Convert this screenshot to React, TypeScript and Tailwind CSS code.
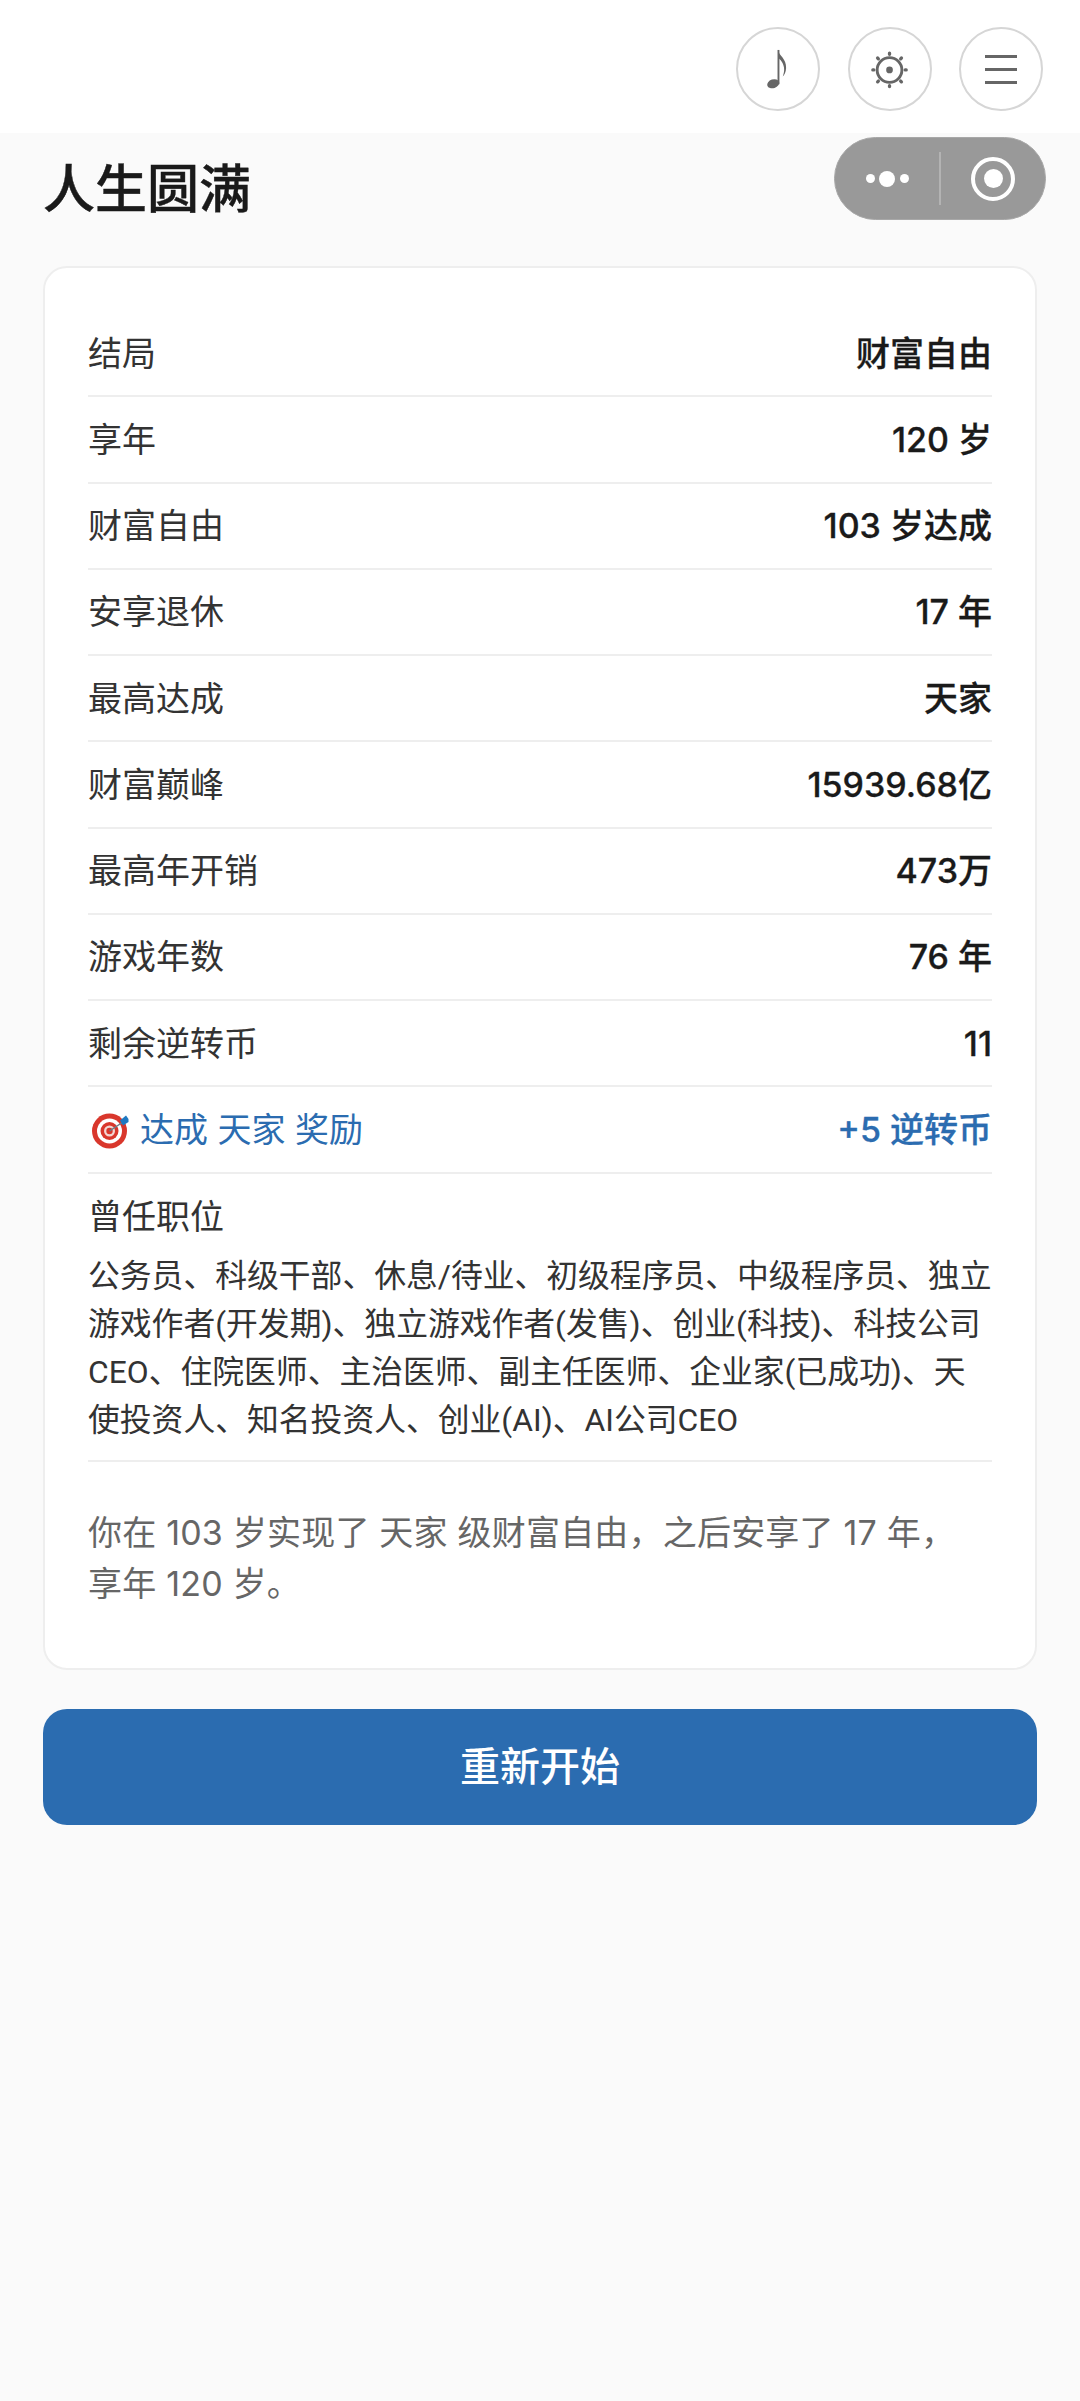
const rows = [
  ['结局', '财富自由'],
  ['享年', '120 岁'],
  ['财富自由', '103 岁达成'],
  ['安享退休', '17 年'],
  ['最高达成', '天家'],
  ['财富巅峰', '15939.68亿'],
  ['最高年开销', '473万'],
  ['游戏年数', '76 年'],
  ['剩余逆转币', '11'],
];

function NoteIcon() {
  return (
    <svg width="84" height="84" viewBox="0 0 84 84" fill="#666">
      <ellipse cx="37" cy="57.5" rx="6.5" ry="4.6" transform="rotate(-18 37 57.5)" />
      <rect x="41.5" y="22" width="2" height="36" />
      <path d="M42 22c1 6 9 9 8.500 19-.2 4-1.500 7-3.500 9 1-3 1.800-6 1.300-9.500C47.500 35 44 32 42 30z" />
    </svg>
  );
}

function GearIcon() {
  return (
    <svg width="84" height="84" viewBox="0 0 84 84" fill="none" stroke="#666">
      <circle cx="41.500" cy="43" r="13" strokeWidth="3" />
      <circle cx="41.500" cy="43" r="3.500" fill="#666" stroke="none" />
      <g strokeWidth="3.500" strokeLinecap="round">
        <path d="M41.500 26.500v-1M41.500 59.500v1M25 43h-1M58 43h1" />
        <path d="M29.800 31.300l-.8-.8M53.200 31.300l.8-.8M29.800 54.700l-.8.8M53.200 54.700l.8.8" />
      </g>
    </svg>
  );
}

function TargetEmoji() {
  return (
    <svg width="40" height="40" viewBox="0 0 40 40" className="ml-[3px] shrink-0">
      <circle cx="18.500" cy="22" r="17.500" fill="#d9372c" />
      <circle cx="18.500" cy="22" r="12.500" fill="#fff" />
      <circle cx="18.500" cy="22" r="9" fill="#d9372c" />
      <circle cx="18.500" cy="22" r="5.500" fill="#f3d6d2" />
      <circle cx="18.500" cy="22" r="3.200" fill="#d9372c" />
      <path d="M18.500 22L32 13" stroke="#6b7c88" strokeWidth="1.500" />
      <path d="M29 11.500l6-5 2.500 3.500 0 3-5.500 3.500z" fill="#1f78c1" />
    </svg>
  );
}

export default function App() {
  return (
    <div
      className="relative min-h-[2401px] bg-[#fafafa] text-[#333]"
      style={{ fontFamily: 'Inter, "Noto Sans CJK SC", sans-serif' }}
    >
      {/* top bar */}
      <header className="flex h-[133px] items-center justify-end gap-[27.500px] bg-white pt-[5px] pr-[37px]">
        <button className="flex h-[84px] w-[84px] items-center justify-center rounded-full border-2 border-[#d6d6d6]">
          <NoteIcon />
        </button>
        <button className="flex h-[84px] w-[84px] items-center justify-center rounded-full border-2 border-[#d6d6d6]">
          <GearIcon />
        </button>
        <button className="flex h-[84px] w-[84px] flex-col items-center justify-center gap-[10px] rounded-full border-2 border-[#d6d6d6]">
          <span className="h-[3px] w-[32px] bg-[#666]" />
          <span className="h-[3px] w-[32px] bg-[#666]" />
          <span className="h-[3px] w-[32px] bg-[#666]" />
        </button>
      </header>

      {/* capsule of the host app */}
      <div className="absolute left-[834px] top-[137px] flex h-[83px] w-[212px] items-center rounded-full border border-[#a8a8a8] bg-[#999]">
        <div className="flex w-[104px] items-center justify-center gap-[4.500px]">
          <span className="h-[9px] w-[9px] rounded-full bg-white" />
          <span className="h-[16px] w-[16px] rounded-full bg-white" />
          <span className="h-[9px] w-[9px] rounded-full bg-white" />
        </div>
        <span className="h-[53px] w-[2px] bg-[#b3b3b3]" />
        <div className="flex flex-1 items-center justify-center">
          <span className="flex h-[44px] w-[44px] items-center justify-center rounded-full border-[4px] border-white">
            <span className="h-[19px] w-[19px] rounded-full bg-white" />
          </span>
        </div>
      </div>

      <main className="px-[43px]">
        <h1 className="flex h-[133px] items-center pb-[20px] text-[52px] leading-none font-medium text-[#1a1a1a] [-webkit-text-stroke-width:0.4px]">
          人生圆满
        </h1>

        <section className="rounded-[24px] border-2 border-[#eeeeee] bg-white px-[43px] pt-[43px] pb-[59px]">
          {rows.map(([label, value]) => (
            <div key={label} className="flex h-[86.250px] items-center justify-between border-b-2 border-[#eeeeee] text-[34px]">
              <span>{label}</span>
              <span className="font-medium text-[#1a1a1a] [-webkit-text-stroke-width:0.3px]">{value}</span>
            </div>
          ))}

          <div className="flex h-[86.250px] items-center justify-between border-b-2 border-[#eeeeee] text-[34px] text-[#2b6cb0]">
            <span className="flex items-center gap-[9px]">
              <TargetEmoji />
              达成 天家 奖励
            </span>
            <span className="font-medium [-webkit-text-stroke-width:0.3px]">+5 逆转币</span>
          </div>

          <div className="border-b-2 border-[#eeeeee] pt-[18px] pb-[16px]">
            <div className="text-[34px] leading-[50px]">曾任职位</div>
            <p className="mt-[10px] font-['Roboto','Noto_Sans_CJK_SC',sans-serif] text-[31.800px] leading-[48px]">
              公务员、科级干部、休息/待业、初级程序员、中级程序员、独立游戏作者(开发期)、独立游戏作者(发售)、创业(科技)、科技公司CEO、住院医师、主治医师、副主任医师、企业家(已成功)、天使投资人、知名投资人、创业(AI)、AI公司CEO
            </p>
          </div>

          <p className="pt-[45px] text-[34px] leading-[51px] tracking-[0.2px] text-[#666]">
            你在 103 岁实现了 天家 级财富自由，之后安享了 17 年，
            <br />
            享年 120 岁。
          </p>
        </section>

        <button className="mt-[39px] flex h-[116px] w-full items-center justify-center rounded-[24px] bg-[#2b6cb0] text-[40px] font-medium text-white">
          重新开始
        </button>
      </main>
    </div>
  );
}
